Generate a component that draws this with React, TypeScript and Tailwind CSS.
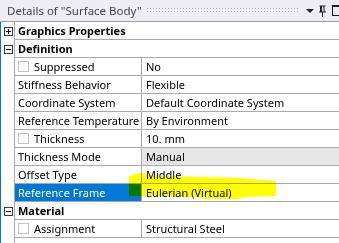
import React from 'react'

type Row =
  | { kind: 'cat'; label: string; open: boolean }
  | { kind: 'prop'; label: string; value: string; check?: boolean; selected?: boolean; grey?: boolean }

const rows: Row[] = [
  { kind: 'cat', label: 'Graphics Properties', open: false },
  { kind: 'cat', label: 'Definition', open: true },
  { kind: 'prop', label: 'Suppressed', value: 'No', check: true },
  { kind: 'prop', label: 'Stiffness Behavior', value: 'Flexible' },
  { kind: 'prop', label: 'Coordinate System', value: 'Default Coordinate System' },
  { kind: 'prop', label: 'Reference Temperature', value: 'By Environment' },
  { kind: 'prop', label: 'Thickness', value: '10. mm', check: true },
  { kind: 'prop', label: 'Thickness Mode', value: 'Manual', grey: true },
  { kind: 'prop', label: 'Offset Type', value: 'Middle' },
  { kind: 'prop', label: 'Reference Frame', value: 'Eulerian (Virtual)', selected: true },
  { kind: 'cat', label: 'Material', open: true },
  { kind: 'prop', label: 'Assignment', value: 'Structural Steel', check: true },
  { kind: 'cat', label: 'Bounding Box', open: false },
]

function Expander({ open }: { open: boolean }) {
  return (
    <svg width="9" height="9" viewBox="0 0 9 9" className="block">
      <rect x="0.5" y="0.5" width="8" height="8" fill="#fff" stroke="#3a3a3a" />
      <line x1="2" y1="4.5" x2="7" y2="4.5" stroke="#000" />
      {!open && <line x1="4.5" y1="2" x2="4.5" y2="7" stroke="#000" />}
    </svg>
  )
}

function Checkbox() {
  return <span className="mr-[5px] inline-block h-[11px] w-[11px] shrink-0 border border-[#c4c4c4] bg-white" />
}

function PropRow({ row }: { row: Row }) {
  if (row.kind === 'cat') {
    return (
      <div className="flex h-[18px]">
        <div className="flex w-[14px] shrink-0 items-center justify-center border-r border-[#a9a9a9] pl-[1px]">
          <Expander open={row.open} />
        </div>
        <div className="flex flex-1 items-center border-b border-[#a9a9a9] pl-[3px] font-bold text-black">
          {row.label}
        </div>
      </div>
    )
  }
  return (
    <div className="flex h-[18px]">
      <div className="w-[14px] shrink-0 border-r border-[#a9a9a9]" />
      <div
        className={`flex w-[127px] shrink-0 items-center overflow-hidden border-b border-r border-[#a9a9a9] pl-[3px] ${
          row.selected ? 'bg-[#0078d7] text-white' : 'text-black'
        }`}
      >
        {row.check && <Checkbox />}
        <span className="whitespace-nowrap">{row.label}</span>
      </div>
      <div
        className={`flex flex-1 items-center border-b border-[#a9a9a9] pl-[4px] whitespace-nowrap text-black ${
          row.grey ? 'bg-[#e6e6e6]' : 'bg-white'
        }`}
      >
        {row.value}
      </div>
    </div>
  )
}

export default function App() {
  return (
    <div className="relative h-[243px] w-[339px] overflow-hidden bg-white font-['Noto_Sans',sans-serif] text-[11px] leading-none">
      {/* title bar */}
      <div className="flex h-[22px] items-center border-b border-[#a0a0a0] bg-[#eeeef2] pl-[7px] text-[11.5px] text-[#444]">
        <span className="whitespace-nowrap">Details of "Surface Body"</span>
        <svg className="ml-[5px] h-[6px] flex-1" preserveAspectRatio="none">
          <defs>
            <pattern id="grip" width="3" height="3" patternUnits="userSpaceOnUse">
              <rect width="1" height="1" fill="#a8a8b0" />
            </pattern>
          </defs>
          <rect width="100%" height="6" fill="url(#grip)" />
        </svg>
        <svg width="34" height="14" viewBox="0 0 34 14" className="ml-[7px] shrink-0">
          <polygon points="1,5 9,5 5,9" fill="#1e1e1e" />
          <path d="M14.5 2h6M15.5 2v6M19 2v6M14 8h7M17.5 8v5" stroke="#1e1e1e" strokeWidth="1" fill="none" />
          <rect x="16" y="2" width="1" height="6" fill="#1e1e1e" />
          <rect x="27.5" y="1.5" width="8" height="10" fill="none" stroke="#1e1e1e" />
          <line x1="27" y1="2" x2="34" y2="2" stroke="#1e1e1e" strokeWidth="2" />
        </svg>
      </div>
      {/* grid */}
      <div className="flex flex-col border-l border-[#0078d7]">
        {rows.map((r) => (
          <PropRow key={r.label} row={r} />
        ))}
      </div>
      {/* highlighter mark */}
      <svg className="pointer-events-none absolute left-0 top-0 mix-blend-multiply" width="339" height="243">
        <path
          d="M129 176 L140 173 L160 176 L200 177 L240 178 L276 181 L276 196 L245 197 L238 199 L205 199 L195 197 L150 196 L129 196 Z"
          fill="#ffff00"
        />
      </svg>
    </div>
  )
}
